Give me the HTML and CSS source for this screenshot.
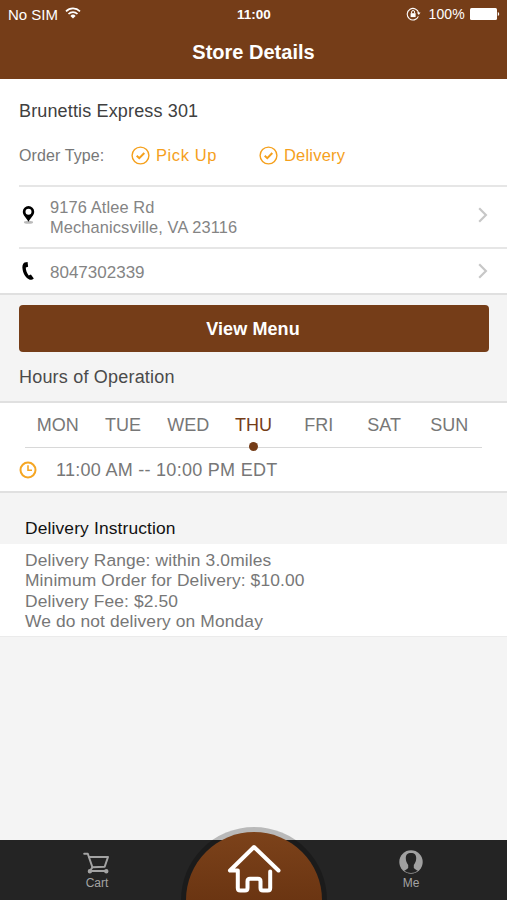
FILE: index.html
```html
<!DOCTYPE html>
<html lang="en">
<head>
    <meta charset="UTF-8">
    <meta name="viewport" content="width=device-width, initial-scale=1.0">
    <title>Store Details</title>
    <link rel="stylesheet" href="styles.css">
</head>
<body>
    <div class="app">
        <header class="header">
            <div class="status-bar">
                <div class="status-left">
                    <span class="carrier">No SIM</span>
                    <svg class="wifi" width="16" height="12" viewBox="0 0 16 12" fill="none" stroke="#fff" stroke-width="1.7">
                        <path d="M1 4.3a10 10 0 0 1 14 0"/>
                        <path d="M3.5 7a6.4 6.4 0 0 1 9 0"/>
                        <path d="M8 11.5L5.4 8.9a3.7 3.7 0 0 1 5.2 0z" fill="#fff" stroke="none"/>
                    </svg>
                </div>
                <div class="clock">11:00</div>
                <div class="status-right">
                    <svg class="lock" width="15" height="14" viewBox="0 0 15 14" fill="none" stroke="#fff">
                        <path d="M12.4 9.4a5.8 5.8 0 1 1 .3-3.4" stroke-width="1.1"/>
                        <path d="M10.9 5.6h3.6l-1.7 2.5z" fill="#fff" stroke="none"/>
                        <rect x="4.6" y="6.2" width="5" height="3.9" fill="#fff" stroke="none"/>
                        <path d="M5.6 6.4V5a1.5 1.5 0 0 1 3 0v1.4"/>
                    </svg>
                    <span class="percent">100%</span>
                    <svg class="battery" width="30" height="12" viewBox="0 0 30 12" fill="#fff">
                        <rect x="0" y="0" width="27" height="12" rx="1.5"/>
                        <path d="M27.8 4c1.9.6 1.9 3.4 0 4z"/>
                    </svg>
                </div>
            </div>
            <h1 class="title">Store Details</h1>
        </header>

        <section class="store">
            <h2 class="store-name">Brunettis Express 301</h2>
            <div class="order-type">
                <span class="order-label">Order Type:</span>
                <span class="option">
                    <svg width="19" height="19" viewBox="0 0 19 19" fill="none" stroke="#f5a01c">
                        <circle cx="9.5" cy="9.5" r="8.4" stroke-width="1.4"/>
                        <path d="M5.7 9.7l2.6 2.5 5-5.2" stroke-width="2"/>
                    </svg>
                    <span class="pickup">Pick Up</span>
                </span>
                <span class="option">
                    <svg width="19" height="19" viewBox="0 0 19 19" fill="none" stroke="#f5a01c">
                        <circle cx="9.5" cy="9.5" r="8.4" stroke-width="1.4"/>
                        <path d="M5.7 9.7l2.6 2.5 5-5.2" stroke-width="2"/>
                    </svg>
                    <span class="delivery-option">Delivery</span>
                </span>
            </div>
            <div class="row address">
                <svg class="row-icon" width="19" height="20" viewBox="0 0 19 20">
                    <ellipse cx="9.5" cy="17.3" rx="4.6" ry="1.5" fill="#bbb"/>
                    <path d="M9.5 1a5.7 5.7 0 0 0-5.7 5.7c0 3.6 3.5 6 5.7 10 2.2-4 5.7-6.4 5.7-10A5.7 5.7 0 0 0 9.5 1zm0 2.7a3 3 0 1 1 0 6 3 3 0 0 1 0-6z" fill="#000"/>
                </svg>
                <p class="row-text">9176 Atlee Rd<br>Mechanicsville, VA 23116</p>
                <svg class="chevron" width="10" height="16" viewBox="0 0 10 16" fill="none" stroke="#c7c7c7" stroke-width="2.2">
                    <path d="M1.2 1.3L7.9 8l-6.7 6.7"/>
                </svg>
            </div>
            <div class="row phone">
                <svg class="row-icon" width="19" height="20" viewBox="0 0 19 20">
                    <path d="M8.6 1L5.5 1.6C3.4 2.8 3 5.8 3.7 9c.9 4.5 3.5 8.500 7.1 9.700 1.500.4 3.100-.4 4-1.300l-2.900-3.900-2.200.9C8.200 13 6.600 9.200 6.800 6.600l2.300-.8z" fill="#000"/>
                </svg>
                <p class="row-text">8047302339</p>
                <svg class="chevron" width="10" height="16" viewBox="0 0 10 16" fill="none" stroke="#c7c7c7" stroke-width="2.2">
                    <path d="M1.2 1.3L7.9 8l-6.7 6.7"/>
                </svg>
            </div>
        </section>

        <button type="button" class="menu-btn">View Menu</button>

        <h3 class="hours-title">Hours of Operation</h3>
        <section class="hours">
            <div class="days">
                <span class="day">MON</span>
                <span class="day">TUE</span>
                <span class="day">WED</span>
                <span class="day active">THU</span>
                <span class="day">FRI</span>
                <span class="day">SAT</span>
                <span class="day">SUN</span>
            </div>
            <div class="time">
                <svg width="18" height="18" viewBox="0 0 18 18" fill="none" stroke="#f5a623" stroke-width="2">
                    <circle cx="9" cy="9" r="7.5"/>
                    <path d="M9 4.3v5h4" stroke-width="1.6"/>
                </svg>
                <span class="time-text">11:00 AM -- 10:00 PM EDT</span>
            </div>
        </section>

        <h3 class="delivery-title">Delivery Instruction</h3>
        <section class="delivery">
            <p>Delivery Range: within 3.0miles</p>
            <p>Minimum Order for Delivery: $10.00</p>
            <p>Delivery Fee: $2.50</p>
            <p>We do not delivery on Monday</p>
        </section>

        <nav class="tab-bar">
            <a class="tab cart">
                <svg width="28" height="24" viewBox="0 0 28 24" fill="none" stroke="#a3a3a3" stroke-width="2" stroke-linejoin="round" stroke-linecap="round">
                    <path d="M1.2 3.8h3.6l4.600 13.500-2.400 3.700h16.500"/>
                    <path d="M6 7h19l-3.300 9.700-12.300.6"/>
                    <circle cx="6.900" cy="21.2" r="1.2" fill="#a3a3a3"/>
                    <circle cx="23.300" cy="21.2" r="1.2" fill="#a3a3a3"/>
                </svg>
                <span>Cart</span>
            </a>
            <a class="tab me">
                <svg width="24" height="24" viewBox="0 0 24 24">
                    <circle cx="12" cy="12" r="11.7" fill="#a0a0a0"/>
                    <path d="M12 3c-3.800 0-5.400 2.200-5.200 5.600.1 2.600 1 4.900 2.400 6.300v3c-1 1.300-2.600 1.900-4 2.800a11 11 0 0 0 13.600 0c-1.400-.9-3-1.500-4-2.800v-3c1.400-1.400 2.300-3.700 2.400-6.300C17.400 5.200 15.800 3 12 3z" fill="#242424"/>
                </svg>
                <span>Me</span>
            </a>
            <a class="home">
                <svg width="146" height="73" viewBox="0 0 146 73">
                    <defs>
                        <linearGradient id="homeFill" x1="0" y1="0" x2="0" y2="1">
                            <stop offset="0" stop-color="#7c421a"/>
                            <stop offset="1" stop-color="#6b3512"/>
                        </linearGradient>
                    </defs>
                    <circle cx="73" cy="73" r="73" fill="#000" fill-opacity=".24"/>
                    <path d="M5 73a68 68 0 0 1 136 0z" fill="url(#homeFill)"/>
                    <path d="M97.500 43.500L73 20 49 43.500h7.800V61q0 2.500 2.500 2.500h4.700q2.500 0 2.500-2.500v-6.800q0-2.500 2.500-2.500h8q2.500 0 2.500 2.500V61q0 2.500 2.500 2.500h4.700q2.500 0 2.500-2.500V44.500" fill="none" stroke="#fff" stroke-width="4" stroke-linejoin="round" stroke-linecap="round"/>
                </svg>
            </a>
        </nav>
    </div>
</body>
</html>
```
FILE: styles.css
```css
* {
    box-sizing: border-box;
}

body {
    margin: 0;
    font-family: "Liberation Sans", Arial, sans-serif;
    background-color: #f4f4f4;
    color: #777;
}

h1, h2, h3, p {
    margin: 0;
    font-weight: normal;
}

svg {
    display: block;
    flex-shrink: 0;
}

.app {
    display: flex;
    flex-direction: column;
    height: 900px;
    overflow: hidden;
}

/* Header */
.header {
    height: 79px;
    background-color: #753d18;
    color: #fff;
}

.status-bar {
    display: grid;
    grid-template-columns: 1fr auto 1fr;
    align-items: center;
    height: 28px;
    padding: 0 7px 0 8px;
}

.status-left,
.status-right {
    display: flex;
    align-items: center;
}

.status-right {
    justify-content: flex-end;
}

.carrier {
    font-size: 15px;
}

.wifi {
    margin-left: 7px;
    margin-bottom: 2px;
}

.clock {
    font-size: 13.5px;
    font-weight: bold;
}

.lock {
    margin-right: 7px;
}

.percent {
    font-size: 14px;
    letter-spacing: 0.2px;
    margin-right: 5px;
}

.title {
    font-size: 20px;
    font-weight: bold;
    line-height: 48px;
    text-align: center;
}

/* Store info */
.store {
    height: 216px;
    padding-left: 19px;
    background-color: #fff;
    border-bottom: 2px solid #e0e0e0;
}

.store-name {
    padding-top: 18px;
    font-size: 18px;
    letter-spacing: 0.15px;
    line-height: 28px;
    color: #404040;
}

.order-type {
    display: flex;
    align-items: center;
    height: 60px;
}

.order-label {
    width: 112px;
    padding-top: 1px;
    font-size: 16px;
    letter-spacing: 0.1px;
}

.option {
    display: flex;
    align-items: center;
    gap: 6px;
    width: 128px;
    font-size: 16.5px;
    color: #f5a01c;
}

.pickup {
    letter-spacing: 0.6px;
}

.delivery-option {
    letter-spacing: 0.2px;
}

.row {
    display: flex;
    align-items: center;
    padding-right: 19px;
    border-top: 2px solid #e6e6e6;
}

.address {
    height: 62px;
    padding-bottom: 1px;
}

.address .row-icon,
.address .chevron {
    margin-bottom: 4px;
}

.phone {
    height: 46px;
}

.phone .row-icon,
.phone .chevron {
    margin-bottom: 1px;
}

.row-text {
    flex: 1;
    margin-left: 12px;
    font-size: 16.4px;
    letter-spacing: 0.12px;
    line-height: 20px;
    color: #848484;
}

.phone .row-text {
    font-size: 17px;
    letter-spacing: 0;
    padding-top: 3px;
}

/* Menu button */
.menu-btn {
    height: 47px;
    margin: 10px 18px 0 19px;
    padding: 1px 4px 0 2px;
    border: none;
    border-radius: 4px;
    background-color: #753d18;
    color: #fff;
    font-family: inherit;
    font-size: 18px;
    font-weight: bold;
    letter-spacing: 0.1px;
    flex-shrink: 0;
}

/* Hours */
.hours-title {
    height: 49px;
    padding-left: 19px;
    font-size: 18px;
    letter-spacing: 0.2px;
    line-height: 50px;
    color: #4a4a4a;
}

.hours {
    height: 92px;
    background-color: #fff;
    border-top: 2px solid #e0e0e0;
    border-bottom: 2px solid #e0e0e0;
}

.days {
    display: flex;
    height: 45px;
    margin: 0 25px;
    border-bottom: 1px solid #d8d8d8;
}

.day {
    position: relative;
    flex: 1 1 0;
    font-size: 18px;
    line-height: 44px;
    text-align: center;
}

.day.active {
    color: #753d18;
}

.day.active::after {
    content: "";
    position: absolute;
    left: 50%;
    bottom: -4px;
    width: 9px;
    height: 9px;
    margin-left: -4px;
    border-radius: 50%;
    background-color: #753d18;
}

.time {
    display: flex;
    align-items: center;
    height: 44px;
    padding-left: 19px;
}

.time-text {
    margin-left: 19px;
    font-size: 18px;
    letter-spacing: 0.28px;
}

/* Delivery */
.delivery-title {
    height: 51px;
    padding: 24px 0 0 25px;
    font-size: 17.4px;
    letter-spacing: 0.14px;
    line-height: 22px;
    color: #111;
}

.delivery {
    height: 93px;
    padding: 6px 25px;
    background-color: #fff;
    border-bottom: 1px solid #ebebeb;
    font-size: 17.4px;
    letter-spacing: 0.12px;
    line-height: 20.4px;
}

/* Tab bar */
.tab-bar {
    position: relative;
    display: flex;
    justify-content: space-between;
    height: 60px;
    margin-top: auto;
    padding: 0 76px 0 77px;
    background-color: #242424;
}

.tab {
    display: flex;
    flex-direction: column;
    align-items: center;
    gap: 2px;
    width: 40px;
    padding-top: 10px;
    font-size: 12px;
    color: #a3a3a3;
}

.home {
    position: absolute;
    left: 181px;
    bottom: 0;
}
```
